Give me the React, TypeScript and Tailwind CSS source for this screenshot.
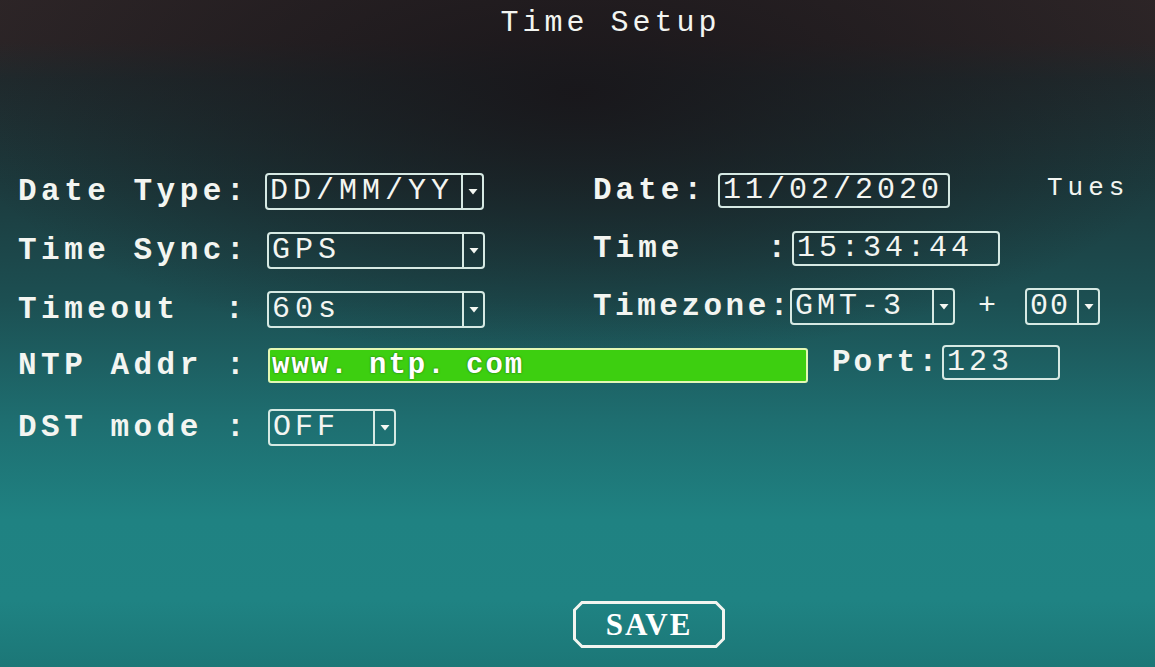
import React from "react";

const mono = "font-['Liberation_Mono','DejaVu_Sans_Mono',monospace]";

function Arrow() {
  return (
    <svg width="12" height="9" viewBox="0 0 12 9" className="mt-[1px]">
      <path d="M1.5 2 L10.5 2 L6 7.5 Z" fill="#f4f7f2" />
    </svg>
  );
}

interface SelectProps {
  value: string;
  width: string;
  tracking?: string;
}

const Select: React.FC<SelectProps> = ({ value, width, tracking = "tracking-[5px]" }) => (
  <div className={`${width} h-[37px] flex border-2 border-[#d6e9e3] rounded-[4px] shrink-0`}>
    <div className={`flex-1 flex items-center pl-[3px] text-[30px] leading-none ${tracking} overflow-hidden whitespace-nowrap`}>
      {value}
    </div>
    <div className="w-[21px] border-l-2 border-[#d6e9e3] flex items-center justify-center">
      <Arrow />
    </div>
  </div>
);

const Field: React.FC<SelectProps> = ({ value, width, tracking = "tracking-[4px]" }) => (
  <div className={`${width} h-[35px] flex items-center border-2 border-[#d6e9e3] rounded-[4px] pl-[3px] shrink-0 text-[30px] leading-none ${tracking} whitespace-nowrap`}>
    {value}
  </div>
);

const Label: React.FC<{ name: string; width: string; tracking?: string }> = ({
  name,
  width,
  tracking = "tracking-[4.5px]",
}) => (
  <div className={`${width} flex justify-between font-bold text-[31px] leading-none ${tracking} shrink-0 whitespace-pre`}>
    <span>{name}</span>
    <span>:</span>
  </div>
);

export default function App() {
  return (
    <div
      className={`${mono} w-full h-[667px] overflow-hidden text-[#f3f5f1] bg-[radial-gradient(ellipse_55%_40%_at_50%_14%,rgba(24,21,25,0.9)_0%,rgba(24,21,25,0)_100%),linear-gradient(180deg,#2d2527_0px,#2c2527_42px,#202b2e_80px,#1c3a3d_180px,#1c4f52_300px,#1e6e70_420px,#1f8282_520px,#1f8383_600px,#1c7777_667px)]`}
    >
      {/* title */}
      <div className="h-[45px] flex items-center justify-center pl-[66px] text-[30px] leading-none tracking-[4px]">
        Time Setup
      </div>

      <div className="mt-[127px] pl-[18px] flex flex-col gap-[21px]">
        {/* row 1 */}
        <div className="h-[38px] flex items-center">
          <div className="w-[575px] shrink-0 flex items-center">
            <Label name="Date Type" width="w-[230px]" />
            <div className="ml-[17px]">
              <Select value="DD/MM/YY" width="w-[219px]" />
            </div>
          </div>
          <div className="flex items-center -mt-[2px]">
            <Label name="Date" width="w-[110px]" tracking="tracking-[4px]" />
            <div className="ml-[15px]">
              <Field value="11/02/2020" width="w-[232px]" />
            </div>
            <div className="ml-[97px] text-[26px] leading-none tracking-[5px] -mt-[4px]">Tues</div>
          </div>
        </div>

        {/* row 2 */}
        <div className="h-[38px] flex items-center">
          <div className="w-[575px] shrink-0 flex items-center">
            <Label name="Time Sync" width="w-[230px]" />
            <div className="ml-[19px]">
              <Select value="GPS" width="w-[218px]" />
            </div>
          </div>
          <div className="flex items-center -mt-[4px]">
            <Label name="Time" width="w-[197px]" tracking="tracking-[4px]" />
            <div className="ml-[2px]">
              <Field value="15:34:44" width="w-[208px]" />
            </div>
          </div>
        </div>

        {/* row 3 */}
        <div className="h-[38px] flex items-center">
          <div className="w-[575px] shrink-0 flex items-center">
            <Label name="Timeout" width="w-[230px]" />
            <div className="ml-[19px]">
              <Select value="60s" width="w-[218px]" />
            </div>
          </div>
          <div className="flex items-center -mt-[6px]">
            <div className="w-[197px] font-bold text-[31px] leading-none tracking-[3.5px] shrink-0">Timezone:</div>
            <Select value="GMT-3" width="w-[165px]" tracking="tracking-[4px]" />
            <div className="ml-[21px] w-[22px] text-center text-[30px] leading-none">+</div>
            <div className="ml-[27px]">
              <Select value="00" width="w-[75px]" tracking="tracking-[2px]" />
            </div>
          </div>
        </div>

        {/* row 4 */}
        <div className="h-[38px] flex items-center -mt-[3px]">
          <Label name="NTP Addr " width="w-[230px]" />
          <div className="ml-[20px] w-[540px] h-[35px] flex items-center bg-[#3dcf10] border-2 border-[#e4f8b4] rounded-[3px] pl-[2px] shrink-0 font-bold text-[29px] leading-none tracking-[2px] text-white [text-shadow:0_0_2px_#1f5a10]">
            www. ntp. com
          </div>
          <div className="ml-[24px] font-bold text-[31px] leading-none tracking-[3px] -mt-[6px]">Port:</div>
          <div className="ml-[2px] -mt-[6px]">
            <Field value="123" width="w-[118px]" />
          </div>
        </div>

        {/* row 5 */}
        <div className="h-[38px] flex items-center mt-[3px]">
          <Label name="DST mode " width="w-[230px]" />
          <div className="ml-[20px]">
            <Select value="OFF" width="w-[128px]" tracking="tracking-[4px]" />
          </div>
        </div>
      </div>

      {/* save */}
      <div className="mt-[155px] ml-[573px]">
        <button className="relative w-[152px] h-[47px] flex items-center justify-center font-['Liberation_Serif',serif] font-bold text-[31px] leading-none tracking-[2px] text-white">
          <svg className="absolute inset-0" width="152" height="47" viewBox="0 0 152 47">
            <polygon
              points="9,1.5 143,1.5 150.5,9 150.5,38 143,45.5 9,45.5 1.5,38 1.5,9"
              fill="none"
              stroke="#f2f5f0"
              strokeWidth="3"
            />
          </svg>
          <span className="relative">SAVE</span>
        </button>
      </div>
    </div>
  );
}
